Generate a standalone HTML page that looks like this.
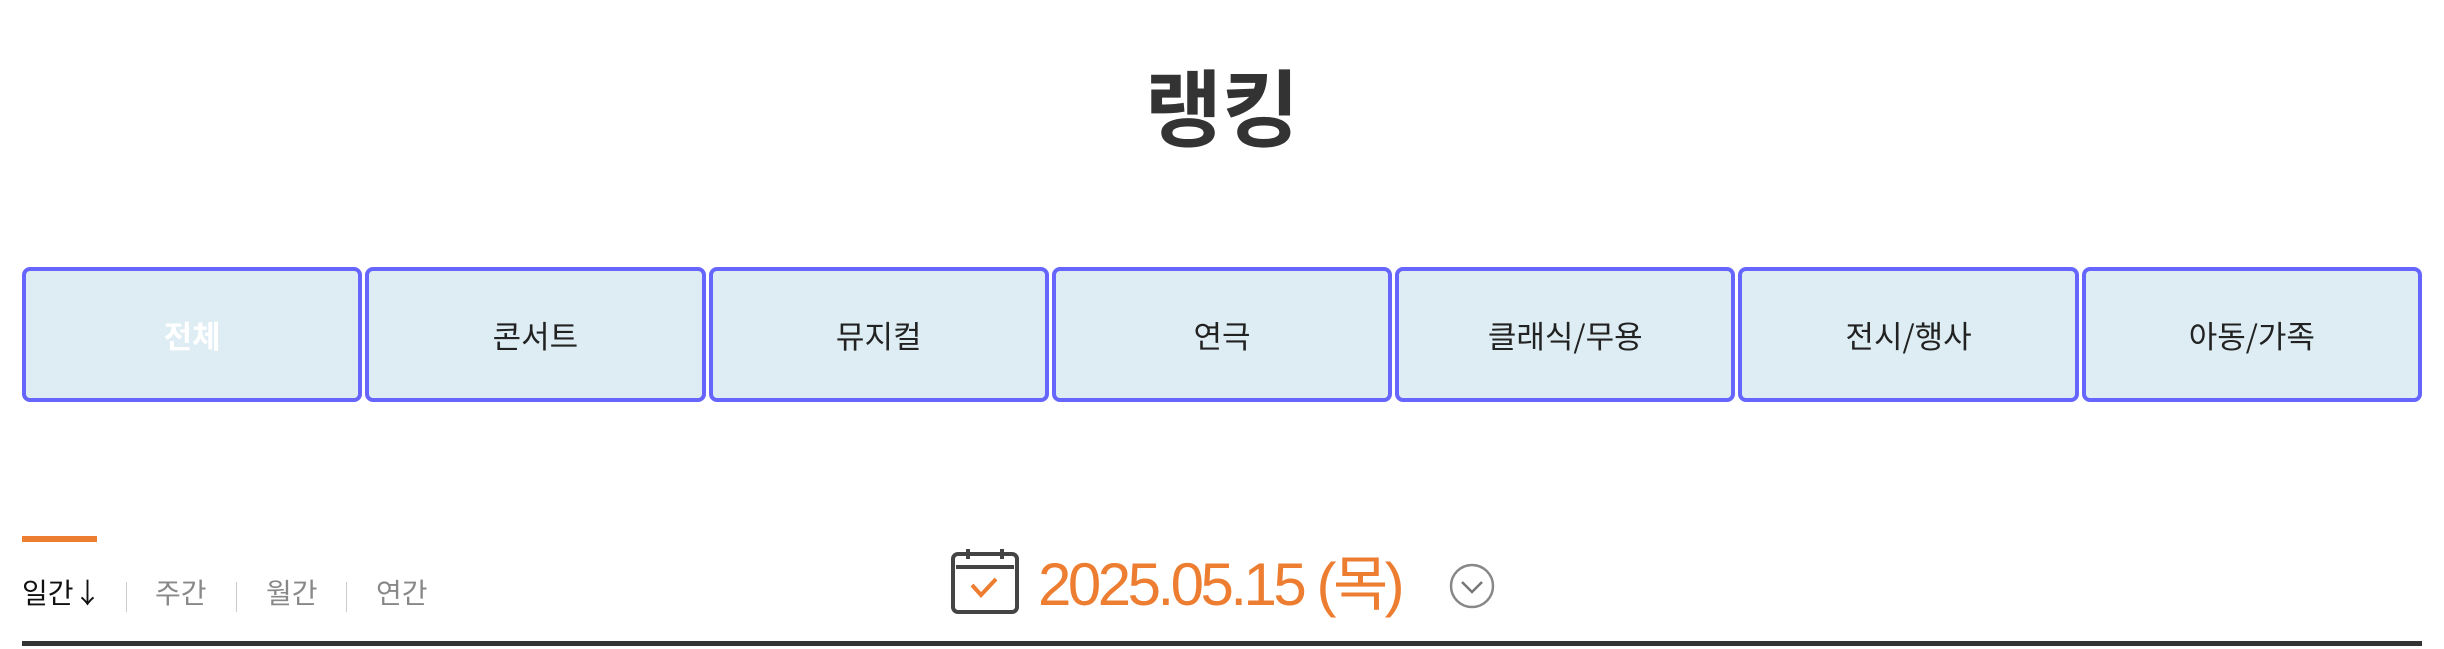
<!DOCTYPE html>
<html><head><meta charset="utf-8"><style>
*{margin:0;padding:0;box-sizing:border-box}
body{width:2444px;height:649px;background:#fff;position:relative;overflow:hidden;font-family:"Liberation Sans","Noto Sans CJK KR",sans-serif;color:#333}
.title{position:absolute;left:0;width:2444px;top:50px;text-align:center;font-size:84px;font-weight:bold;line-height:110px;color:#333;font-family:"Noto Sans CJK KR",sans-serif}
.btns{position:absolute;left:22px;top:267px;width:2400px;height:135px;display:flex;gap:3px}
.btn{flex:1;border:4px solid #6666ff;border-radius:8px;background:#ddedf3;display:flex;align-items:center;justify-content:center;font-size:31px;color:#222;font-family:"Noto Sans CJK KR",sans-serif}
.btn.on{color:#fff;font-weight:bold}
.bar{position:absolute;left:22px;top:536px;width:75px;height:6px;background:#ed7d31}
.tab{position:absolute;top:570px;font-size:28px;line-height:44px;color:#888;font-family:"Noto Sans CJK KR",sans-serif}
.sep{position:absolute;top:582px;width:1px;height:30px;background:#ccc}
.line{position:absolute;left:22px;top:641px;width:2400px;height:5px;background:#333}
.date{position:absolute;left:1038px;top:545px;font-size:60px;line-height:80px;color:#ed7d31;letter-spacing:-3.5px;font-family:"Liberation Sans","Noto Sans CJK KR",sans-serif}
</style></head><body>
<div class="title">랭킹</div>
<div class="btns">
<div class="btn on">전체</div><div class="btn">콘서트</div><div class="btn">뮤지컬</div><div class="btn">연극</div><div class="btn">클래식/무용</div><div class="btn">전시/행사</div><div class="btn">아동/가족</div>
</div>
<div class="bar"></div>
<div class="tab" style="left:22px;color:#111">일간↓</div>
<div class="sep" style="left:126px"></div>
<div class="tab" style="left:155px">주간</div>
<div class="sep" style="left:236px"></div>
<div class="tab" style="left:266px">월간</div>
<div class="sep" style="left:346px"></div>
<div class="tab" style="left:376px">연간</div>
<svg style="position:absolute;left:950px;top:547px" width="72" height="68" viewBox="0 0 72 68">
<rect x="3" y="7" width="64" height="58" rx="5" fill="none" stroke="#444" stroke-width="4"/>
<line x1="6" y1="20" x2="64" y2="20" stroke="#444" stroke-width="4"/>
<line x1="18" y1="2" x2="18" y2="12" stroke="#444" stroke-width="4"/>
<line x1="52" y1="2" x2="52" y2="12" stroke="#444" stroke-width="4"/>
<polyline points="22,38 31,48 46,32" fill="none" stroke="#ed7d31" stroke-width="4"/>
</svg>
<div class="date">2025.05.15 (목)</div>
<svg style="position:absolute;left:1449px;top:563px" width="46" height="46" viewBox="0 0 46 46">
<circle cx="23" cy="23" r="21" fill="none" stroke="#888" stroke-width="2.5"/>
<polyline points="13,19 23,29 33,19" fill="none" stroke="#777" stroke-width="2.5"/>
</svg>
<div class="line"></div>
</body></html>
